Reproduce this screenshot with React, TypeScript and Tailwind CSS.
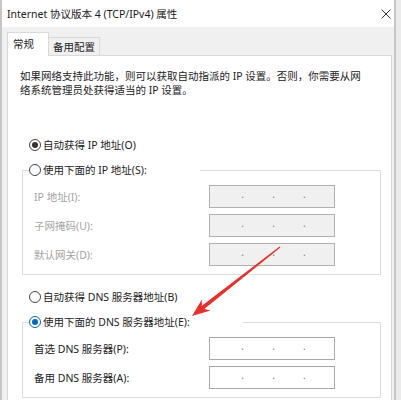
import React from 'react';
import clsx from 'clsx';

function Radio({ checked, blue }: { checked?: boolean; blue?: boolean }) {
  return (
    <span
      className={clsx(
        'flex h-[12px] w-[12px] shrink-0 items-center justify-center rounded-full border bg-white',
        blue ? 'border-[#0067c0]' : 'border-[#444]'
      )}
    >
      {checked && <span className={clsx('h-[6px] w-[6px] rounded-full', blue ? 'bg-[#0067c0]' : 'bg-[#333]')} />}
    </span>
  );
}

function IpBox({ disabled }: { disabled?: boolean }) {
  return (
    <div
      className={clsx(
        'flex h-[23px] w-[126px] items-center justify-evenly border pl-[3px]',
        disabled ? 'border-[#b0b0b0] bg-[#f0f0f0]' : 'border-[#a9a9a9] bg-white'
      )}
    >
      {[0, 1, 2].map((i) => (
        <span key={i} className="-translate-y-[3px] text-[10px] leading-none text-[#7a7a7a]">
          .
        </span>
      ))}
    </div>
  );
}

function Field({ label, disabled }: { label: string; disabled?: boolean }) {
  return (
    <div className="flex h-[23px] items-center">
      <span className={clsx('w-[175px] whitespace-nowrap', disabled ? 'text-[#a3a3a3]' : 'text-[#222]')}>{label}</span>
      <IpBox disabled={disabled} />
    </div>
  );
}

function Option({ label, checked, blue }: { label: string; checked?: boolean; blue?: boolean }) {
  return (
    <div className="flex h-[14px] items-center gap-[2px] whitespace-nowrap">
      <Radio checked={checked} blue={blue} />
      <span>{label}</span>
    </div>
  );
}

export default function App() {
  return (
    <div className="relative flex h-[400px] w-[401px] overflow-hidden bg-[#ebebeb] font-['Noto_Sans','Noto_Sans_CJK_SC',sans-serif] text-[10.5px] leading-[14px] text-[#222]">
      <div className="flex w-[396px] shrink-0 flex-col border-x-2 border-[#c6c6c6] bg-[#f0f0f0]">
        <div className="flex h-[27px] shrink-0 items-center justify-between bg-white pl-[5px] pr-[3px]">
          <span className="whitespace-nowrap text-[#1a1a1a]">Internet 协议版本 4 (TCP/IPv4) 属性</span>
          <svg width="10" height="10" viewBox="0 0 10 10" className="text-[#333]">
            <path d="M0.5 0.5 L9.5 9.5 M9.5 0.5 L0.5 9.5" stroke="currentColor" strokeWidth="1" />
          </svg>
        </div>

        <div className="flex flex-col pl-[5px] pt-[5px]">
          <div className="flex h-[23px] items-end">
            <div className="relative z-10 -mb-px flex h-[24px] w-[42px] items-center border-x border-t border-[#d9d9d9] bg-white pb-[2px] pl-[5px]">
              常规
            </div>
            <div className="flex h-[18px] w-[51px] items-center justify-center border-r border-t border-[#d9d9d9] bg-[#f0f0f0]">
              备用配置
            </div>
          </div>

          <div className="h-[360px] w-[385px] border border-[#d9d9d9] bg-white pl-[12px] pt-[13px]">
            <p className="whitespace-nowrap">
              如果网络支持此功能，则可以获取自动指派的 IP 设置。否则，你需要从网
              <br />
              络系统管理员处获得适当的 IP 设置。
            </p>

            <div className="mt-[41px] pl-[9px]">
              <Option label="自动获得 IP 地址(O)" checked />
            </div>

            <fieldset className="ml-[2px] mt-[11px] w-[359px] border border-[#dcdcdc] pb-[8px]">
              <legend className="ml-[6px] w-[171px]">
                <Option label="使用下面的 IP 地址(S):" />
              </legend>
              <div className="flex flex-col gap-[6px] pl-[11px] pt-[8px]">
                <Field label="IP 地址(I):" disabled />
                <Field label="子网掩码(U):" disabled />
                <Field label="默认网关(D):" disabled />
              </div>
            </fieldset>

            <div className="mt-[15px] pl-[9px]">
              <Option label="自动获得 DNS 服务器地址(B)" />
            </div>

            <fieldset className="ml-[2px] mt-[11px] w-[359px] border border-[#dcdcdc] pb-[8px]">
              <legend className="ml-[6px] w-[214px]">
                <Option label="使用下面的 DNS 服务器地址(E):" checked blue />
              </legend>
              <div className="flex flex-col gap-[6px] pl-[11px] pt-[8px]">
                <Field label="首选 DNS 服务器(P):" />
                <Field label="备用 DNS 服务器(A):" />
              </div>
            </fieldset>
          </div>
        </div>
      </div>

      <svg className="pointer-events-none absolute inset-0" width="401" height="400" viewBox="0 0 401 400">
        <polygon
          points="280.4,247.6 204.3,308.9 210.5,310.4 192,316 201.9,299.4 201.8,305.8 279.6,246.5"
          fill="#e8302a"
        />
      </svg>
    </div>
  );
}
